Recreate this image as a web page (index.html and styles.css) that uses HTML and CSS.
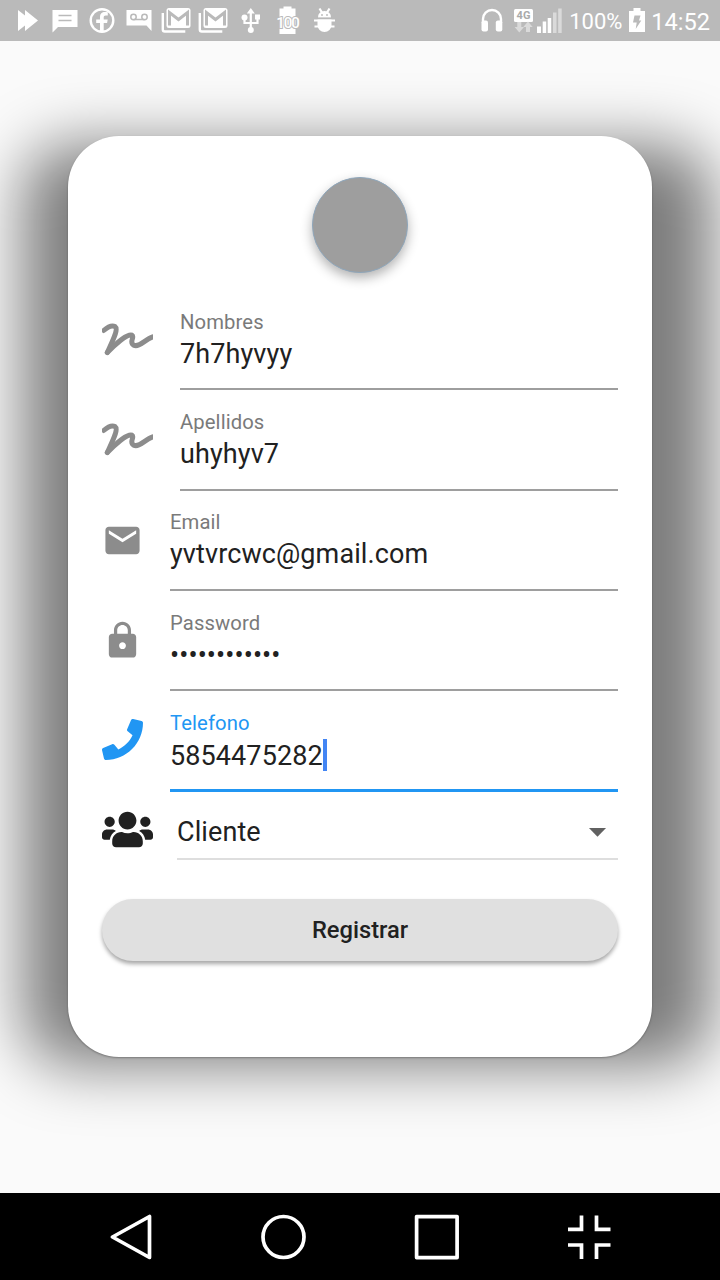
FILE: index.html
```html
<!DOCTYPE html>
<html lang="es">
<head>
<meta charset="utf-8">
<title>Registro</title>
<link rel="stylesheet" href="styles.css">
</head>
<body>
<svg class="defs" width="0" height="0">
  <symbol id="signature" viewBox="18 13.500 153 123"><path class="pen" d="M23 45C33 36 47 28 57 33C68 41 52 72 34 111"/><path class="pen" d="M34 111C54 90 94 53 108 59C117 64 98 80 113 89C129 97 147 72 170 64"/></symbol>
</svg>
<header class="status">
  <div class="notifs">
    <svg viewBox="8.500 0 37 41"><path d="M17.500 10l7 5.500V10L37.500 20.500 24.500 31v-5.500l-7 5.500z"/></svg>
    <svg viewBox="45.500 0 37 41"><path d="M52 10h25v17H57.500L52 32.500z"/><path class="cut" d="M58 15.500h13M58 20.500h13"/></svg>
    <svg viewBox="82.500 0 37 41"><circle class="line" cx="101.500" cy="20.500" r="11.300"/><path d="M99.500 32V23h-3.800v-3.500h3.800v-2.200c0-3.800 2-5.300 4.800-5.300 1.300 0 2.300.1 3 .3v3.200h-2c-1.600 0-2.100.8-2.100 2v2h4l-.6 3.500h-3.400v9z"/></svg>
    <svg viewBox="119.500 0 37 41"><path d="M126 10h25v21l-5-5.500h-20z"/><path class="cut" d="M133 19.500h11"/><circle class="cut" cx="133" cy="17" r="2.700"/><circle class="cut" cx="144" cy="17" r="2.700"/></svg>
    <svg viewBox="156.500 0 37 41"><path class="line" d="M162.300 13v16.500q0 2 2 2h20.500"/><rect x="166" y="8" width="24" height="20" rx="2.500"/><path class="cut thick" d="M169 25.500V12.500l9 7 9-7v13"/></svg>
    <svg viewBox="193.500 0 37 41"><path class="line" d="M199.300 13v16.500q0 2 2 2h20.500"/><rect x="203" y="8" width="24" height="20" rx="2.500"/><path class="cut thick" d="M206 25.500V12.500l9 7 9-7v13"/></svg>
    <svg viewBox="230.500 0 37 41"><path class="line thin" d="M250.300 12v17M244 18v5h13v-5"/><path d="M250.300 8l4 5.500h-8zM254.500 14.500h5v5h-5z"/><circle cx="244" cy="17.500" r="3"/><circle cx="250.300" cy="30" r="3"/></svg>
    <svg viewBox="267.500 0 37 41"><path d="M279 8.500h4V6.500h8v2h4V34h-16z"/><text class="level halo" x="287" y="27.500">100</text></svg>
    <svg viewBox="304.500 0 37 41"><path d="M317.500 17.500q0-6 6.500-6.500 6.500.5 6.500 6.500zM317 19.500h14v6q-1 6.500-7 6.500t-7-6.500z"/><path class="line thin" d="M319 8.500l2.500 4M329 8.500l-2.500 4M313.500 20.500h21M314 26.500h20"/><path class="cut fine" d="M316.500 18.300h15"/><circle class="dot" cx="321.500" cy="15" r=".9"/><circle class="dot" cx="326.500" cy="15" r=".9"/></svg>
  </div>
  <div class="system">
    <svg width="24" height="41" viewBox="480.500 0 24 41"><path class="line" d="M483.500 23v-4a9 9 0 0 1 18 0v4"/><rect x="482" y="20.500" width="6.500" height="11" rx="2"/><rect x="496.300" y="20.500" width="6.500" height="11" rx="2"/></svg>
    <svg width="22" height="41" viewBox="512.500 0 22 41"><rect x="514.500" y="9" width="19" height="13" rx="1.500"/><text class="net" x="524" y="19.300">4G</text><path class="faded" d="M517.800 22h4v5h2.700l-4.700 5.500-4.700-5.500h2.700zM526.500 32v-5h-2.700l4.700-5.500 4.700 5.500h-2.700v5z"/></svg>
    <svg width="28" height="41" viewBox="536 0 28 41"><path d="M538 26.500h4V33h-4zM543.700 21.500h3.500V33h-3.500zM548.700 18h3.500v15h-3.500z"/><path class="faded" d="M554 12.500h3.500V33H554zM559.200 8.500h3.500V33h-3.500z"/></svg>
    <span class="percent">100%</span>
    <svg width="18" height="41" viewBox="629 0 18 41"><path d="M630 11h4.500V8h7v3h4.500v21h-16z"/><path class="dot" d="M635.500 15.500h6l-1.500 5h2.300l-5.600 8.500 1-6.500H634z"/></svg>
    <span class="clock">14:52</span>
  </div>
</header>

<main class="page">
  <div class="stage">
    <form class="card">
      <div class="avatar"></div>
      <div class="fields">
        <div class="row">
          <svg class="wide"><use href="#signature"/></svg>
          <div class="field"><span class="label">Nombres</span><span class="value">7h7hyvyy</span></div>
        </div>
        <div class="row">
          <svg class="wide"><use href="#signature"/></svg>
          <div class="field"><span class="label">Apellidos</span><span class="value">uhyhyv7</span></div>
        </div>
        <div class="row">
          <svg class="square" viewBox="0 0 24 24"><path d="M20 4H4c-1.100 0-2 .9-2 2v12c0 1.100.9 2 2 2h16c1.100 0 2-.9 2-2V6c0-1.100-.9-2-2-2zm0 4l-8 5-8-5V6l8 5 8-5v2z"/></svg>
          <div class="field"><span class="label">Email</span><span class="value">yvtvrcwc@gmail.com</span></div>
        </div>
        <div class="row">
          <svg class="square lock" viewBox="0 0 24 24"><path d="M18 8h-1V6c0-2.760-2.240-5-5-5S7 3.240 7 6v2H6c-1.100 0-2 .9-2 2v10c0 1.100.9 2 2 2h12c1.100 0 2-.9 2-2V10c0-1.100-.9-2-2-2zm-6 9c-1.100 0-2-.9-2-2s.9-2 2-2 2 .9 2 2-.9 2-2 2zm3.100-9H8.900V6c0-1.710 1.390-3.100 3.100-3.100s3.100 1.390 3.100 3.100v2z"/></svg>
          <div class="field"><span class="label">Password</span><span class="value">••••••••••••</span></div>
        </div>
        <div class="row active">
          <svg class="square" viewBox="0 0 512 512"><path d="M493.400 24.600l-104-24c-11.300-2.600-22.900 3.300-27.500 13.900l-48 112c-4.200 9.800-1.400 21.300 6.900 28l60.600 49.600c-36 76.700-98.900 140.500-177.200 177.200l-49.600-60.600c-6.800-8.300-18.200-11.100-28-6.900l-112 48C3.900 366.500-2 378.100.6 389.400l24 104C27.100 504.200 36.700 512 48 512c256.100 0 464-207.500 464-464 0-11.200-7.700-20.900-18.600-23.400z"/></svg>
          <div class="field"><span class="label">Telefono</span><span class="value">5854475282<i class="caret"></i></span></div>
        </div>
      </div>
      <div class="role">
        <svg class="wide" viewBox="0 0 640 512"><path d="M96 224c35.300 0 64-28.700 64-64s-28.700-64-64-64-64 28.700-64 64 28.700 64 64 64zm448 0c35.300 0 64-28.700 64-64s-28.700-64-64-64-64 28.700-64 64 28.700 64 64 64zm32 32h-64c-17.600 0-33.500 7.100-45.100 18.600 40.300 22.100 68.900 62 75.100 109.400h66c17.700 0 32-14.300 32-32v-32c0-35.300-28.700-64-64-64zm-256 0c61.900 0 112-50.100 112-112S381.900 32 320 32 208 82.100 208 144s50.100 112 112 112zm76.800 32h-8.300c-20.800 10-43.900 16-68.500 16s-47.600-6-68.500-16h-8.300C179.600 288 128 339.600 128 403.200V432c0 26.500 21.500 48 48 48h288c26.500 0 48-21.500 48-48v-28.800c0-63.600-51.600-115.200-115.200-115.200zm-223.700-13.400C161.500 263.100 145.600 256 128 256H64c-35.300 0-64 28.700-64 64v32c0 17.700 14.300 32 32 32h65.900c6.300-47.400 34.900-87.300 75.200-109.400z"/></svg>
        <div class="select"><span class="choice">Cliente</span><svg class="arrow" viewBox="0 0 24 24"><path d="M7 10l5 5 5-5z"/></svg></div>
      </div>
      <button class="submit" type="button">Registrar</button>
    </form>
  </div>
</main>

<nav class="navbar">
  <svg viewBox="0 0 46 46"><path d="M40.500 2.500v41L3.500 23z"/></svg>
  <svg viewBox="0 0 46 46"><circle cx="22.500" cy="23" r="20.500"/></svg>
  <svg viewBox="0 0 46 46"><rect x="2.600" y="2.600" width="40.500" height="41"/></svg>
  <svg viewBox="0 0 46 46"><path class="miter" d="M15.500 1.500V15.300H2M30.500 1.500V15.300H44.500M2 31H15.500v14M44.500 31H30.500v14"/></svg>
</nav>
</body>
</html>
```
FILE: styles.css
```css
* { box-sizing: border-box; }
body {
  margin: 0;
  width: 720px;
  height: 1280px;
  display: flex;
  flex-direction: column;
  overflow: hidden;
  background: #fafafa;
  color: #212121;
  font-family: Roboto, sans-serif;
}
svg { display: block; flex: none; }
.defs { position: absolute; }
.pen { fill: none; stroke: #8c8c8c; stroke-width: 15; stroke-linejoin: round; stroke-linecap: round; }

.status {
  height: 41px;
  flex: none;
  display: flex;
  justify-content: space-between;
  background: #bababa;
  color: #fff;
  fill: #fff;
}
.notifs { display: flex; padding-left: 8.5px; }
.notifs svg { width: 37px; height: 41px; }
.line { fill: none; stroke: #fff; stroke-width: 2.4; }
.thin { stroke-width: 2.2; }
.cut { fill: none; stroke: #bababa; stroke-width: 1.5; }
.thick { stroke-width: 3; }
.fine { stroke-width: 1; }
.dot { fill: #bababa; }
.faded { fill: #dadada; }
.level { font-size: 15px; font-weight: 500; text-anchor: middle; letter-spacing: -1px; }
.halo { stroke: #bababa; stroke-width: 2px; paint-order: stroke; }
.net { font-size: 11px; font-weight: 700; fill: #aaa; text-anchor: middle; }
.system { display: flex; align-items: center; padding-right: 10px; }
.system svg:nth-child(2) { margin-left: 8px; }
.system svg:nth-child(3) { margin-left: 1.5px; }
.percent { width: 60px; padding-left: 1px; margin-left: 5px; font-size: 22px; line-height: 41px; padding-top: 2.5px; }
.clock { margin-left: 5px; font-size: 23.6px; line-height: 41px; padding-top: 3px; }

.page { flex: 1; padding: 95px 68px 136px; overflow: hidden; }
.stage { position: relative; height: 921px; }
.stage::before {
  content: "";
  position: absolute;
  inset: 8px -60px -9px -45px;
  border-radius: 50px;
  background: rgba(0, 0, 0, .5);
  filter: blur(31px);
}
.card {
  position: relative;
  height: 921px;
  padding: 41px 34px 0;
  border-radius: 51px;
  background: #fff;
  box-shadow: 0 1px 2px rgba(0, 0, 0, .3);
}
.avatar {
  width: 96px;
  height: 96px;
  margin: 0 auto;
  border-radius: 50%;
  border: 1px solid #8ea6bb;
  background: #9e9e9e;
  box-shadow: 0 5px 12px rgba(0, 0, 0, .3);
}
.fields { padding-top: 17px; }
.row { display: flex; align-items: center; gap: 27px; height: 100.3px; fill: #8c8c8c; }
.wide { width: 51px; height: 41px; }
.square { width: 41px; height: 41px; }
.lock { margin-bottom: 2px; }
.field {
  flex: 1;
  align-self: stretch;
  display: flex;
  flex-direction: column;
  padding-top: 19.700px;
  border-bottom: 2px solid #9e9e9e;
}
.label { font-size: 20.25px; line-height: 24px; letter-spacing: .1px; color: #7a7a7a; }
.value { display: flex; align-items: center; margin-top: 4px; font-size: 27px; line-height: 32px; letter-spacing: .1px; }
.caret { width: 4px; height: 32px; margin-bottom: 2px; background: #4285f4; }
.active { fill: #2196f3; }
.active .square { margin-bottom: 3px; }
.active .field { margin-bottom: -1px; border-bottom: 3.4px solid #2196f3; }
.active .label { color: #2196f3; }
.role { display: flex; gap: 24px; height: 68px; align-items: flex-start; padding-top: 18px; fill: #212121; }
.select {
  flex: 1;
  display: flex;
  justify-content: space-between;
  align-items: center;
  height: 49px;
  margin-top: 1.500px;
  padding-bottom: 6px;
  font-size: 27px;
  letter-spacing: .1px;
  border-bottom: 2px solid #dedede;
}
.choice { padding-top: 2px; }
.arrow { width: 41px; height: 41px; fill: #616161; }
.submit {
  display: block;
  width: 516px;
  height: 61.500px;
  margin-top: 40px;
  border: 0;
  border-radius: 31px;
  background: #e0e0e0;
  color: #212121;
  font: 500 23.7px Roboto, sans-serif;
  box-shadow: 0 3px 4px rgba(0, 0, 0, .35);
}
.navbar {
  height: 87px;
  flex: none;
  display: flex;
  align-items: center;
  justify-content: space-between;
  padding: 0 108px 0 109px;
  background: #000;
}
.navbar svg { width: 46px; height: 46px; fill: none; stroke: #fff; stroke-width: 3.7; stroke-linejoin: round; }
.navbar .miter { stroke-linejoin: miter; }
```
